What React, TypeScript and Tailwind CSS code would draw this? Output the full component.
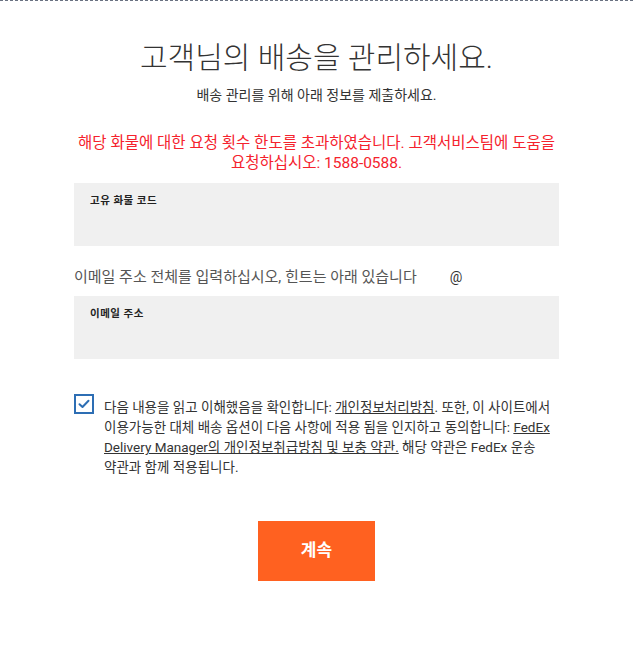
import React from "react";

function App() {
  return (
    <div
      className="min-h-[661px] bg-white border-t border-dashed border-gray-500 text-[#333] break-keep"
      style={{ fontFamily: "Roboto, 'Noto Sans CJK KR', sans-serif" }}
    >
      <div className="w-[485px] mx-auto pt-[37px] flex flex-col">
        <h1 className="text-center text-[30px] font-light leading-[40px] text-[#333]">
          고객님의 배송을 관리하세요.
        </h1>
        <p className="text-center text-[14px] leading-[20px] mt-[7px] text-[#333]">
          배송 관리를 위해 아래 정보를 제출하세요.
        </p>

        <p className="text-center text-[15.5px] leading-[20px] mt-[28px] text-[#f5222d] -mx-2">
          해당 화물에 대한 요청 횟수 한도를 초과하였습니다. 고객서비스팀에 도움을 요청하십시오: 1588-0588.
        </p>

        <div className="mt-[10px] h-[63px] bg-[#f0f0f0] px-[16px] pt-[11px]">
          <span className="block text-[10.5px] leading-[14px] tracking-[0.5px] font-bold text-[#222]">
            고유 화물 코드
          </span>
        </div>

        <div className="mt-[21px] flex items-center text-[15px] leading-[20px] text-[#555]">
          <span>이메일 주소 전체를 입력하십시오, 힌트는 아래 있습니다</span>
          <span className="ml-[33px] text-[#333] text-[14px]">@</span>
        </div>

        <div className="mt-[9px] h-[63px] bg-[#f0f0f0] px-[16px] pt-[11px]">
          <span className="block text-[10.5px] leading-[14px] tracking-[0.5px] font-bold text-[#222]">
            이메일 주소
          </span>
        </div>

        <div className="mt-[35px] flex items-start gap-[10px]">
          <div className="w-[20px] h-[20px] shrink-0 border-2 border-[#2d6eb4] flex items-center justify-center">
            <svg width="12" height="10" viewBox="0 0 12 10" fill="none">
              <path d="M1.5 5.2L4.5 8L10.5 1.8" stroke="#2d6eb4" strokeWidth="2" strokeLinecap="round" strokeLinejoin="round" />
            </svg>
          </div>
          <p className="text-[13.5px] leading-[20px] text-[#333] mt-[3px]">
            다음 내용을 읽고 이해했음을 확인합니다: <span className="underline">개인정보처리방침</span>. 또한, 이 사이트에서 이용가능한 대체 배송 옵션이 다음 사항에 적용 됨을 인지하고 동의합니다:{" "}
            <span className="underline">FedEx Delivery Manager의 개인정보취급방침 및 보충 약관.</span> 해당 약관은 FedEx 운송 약관과 함께 적용됩니다.
          </p>
        </div>

        <div className="mt-[44px] flex justify-center">
          <button className="w-[117px] h-[60px] bg-[#ff6120] text-white text-[17px] font-bold">
            계속
          </button>
        </div>
      </div>
    </div>
  );
}

export default App;
